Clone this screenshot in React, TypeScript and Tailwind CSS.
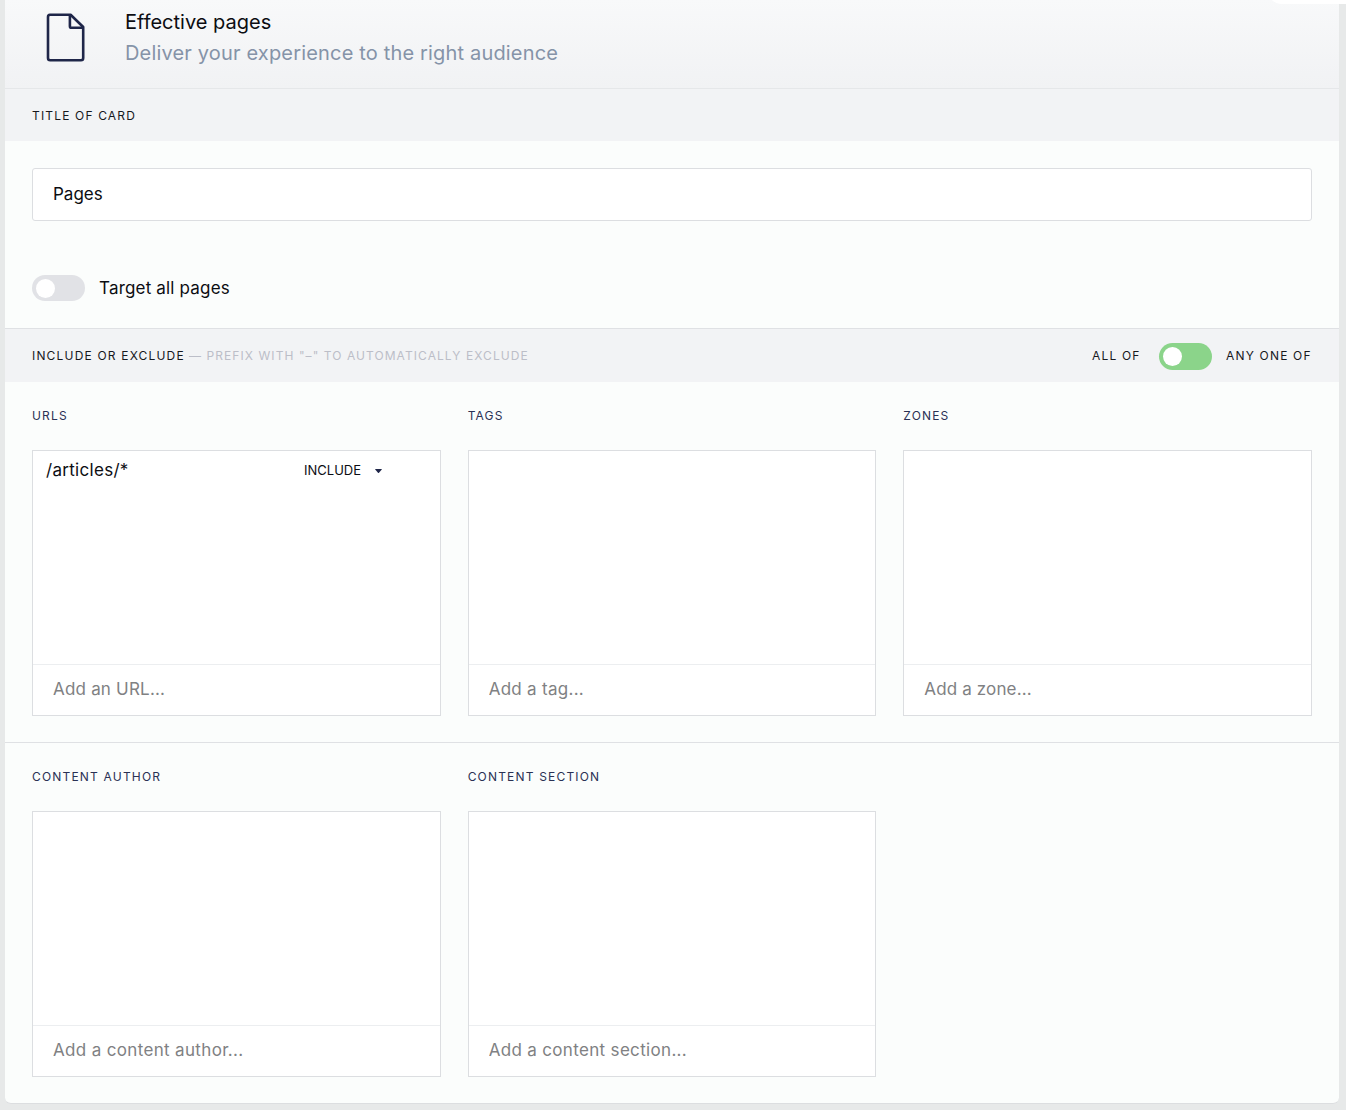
import { useState } from "react";

type ToggleProps = {
    tone: string;
    className?: string;
    onClick: () => void;
};

const Toggle = ({ tone, className = "", onClick }: ToggleProps) => (
    <button
        type="button"
        onClick={onClick}
        className={`flex w-[53px] shrink-0 items-center rounded-full pl-1 ${tone} ${className}`}
    >
        <span className="h-[19px] w-[18.5px] rounded-full bg-white" />
    </button>
);

const FileIcon = () => (
    <svg width="40" height="50" viewBox="0 0 40 50" fill="none" stroke="#1f2649" strokeWidth="2.6" strokeLinejoin="round">
        <path d="M4 2.8H24.6L37.2 15V46.1a2.2 2.2 0 0 1-2.2 2.2H4.2a2.2 2.2 0 0 1-2.2-2.2V5a2.2 2.2 0 0 1 2-2.2Z" />
        <path d="M23.9 2.8V14.2a1.6 1.6 0 0 0 1.6 1.6H37.2" />
    </svg>
);

type Field = {
    label: string;
    placeholder: string;
    spacing: string;
    items?: string[];
};

const pageFields: Field[] = [
    { label: "URLS", placeholder: "Add an URL...", spacing: "tracking-[0.2px]", items: ["/articles/*"] },
    { label: "TAGS", placeholder: "Add a tag...", spacing: "tracking-[0.28px]" },
    { label: "ZONES", placeholder: "Add a zone...", spacing: "tracking-[0.14px]" },
];

const contentFields: Field[] = [
    { label: "CONTENT AUTHOR", placeholder: "Add a content author...", spacing: "tracking-[0.34px]" },
    { label: "CONTENT SECTION", placeholder: "Add a content section...", spacing: "tracking-[0.33px]" },
];

const FieldColumn = ({ field }: { field: Field }) => (
    <div>
        <h3 className="h-4 text-xs leading-4 tracking-[1.18px] text-[#2a3154]">{field.label}</h3>
        <div className="mt-[26px] flex h-[266px] flex-col border border-[#dcdee1] bg-white">
            <ul className="flex-1">
                {(field.items ?? []).map((item) => (
                    <li key={item} className="flex h-10 items-center pl-[13px]">
                        <span className="w-[258px] text-[17px] tracking-[0.3px]">{item}</span>
                        <button type="button" className="flex items-center text-[13px]">
                            <span className="w-[57px] text-left">INCLUDE</span>
                            <svg className="ml-[14px]" width="7" height="4" viewBox="0 0 7 4">
                                <path d="M0.6 0H6.4Q7.2 0 6.6 0.7L4 3.7Q3.5 4.2 3 3.7L0.4 0.7Q-0.2 0 0.6 0Z" fill="#1f2649" />
                            </svg>
                        </button>
                    </li>
                ))}
            </ul>
            <input
                className={`h-[51px] border-t border-[#eceef0] px-5 pb-0.5 text-[17px] outline-none placeholder:text-[#808183] ${field.spacing}`}
                placeholder={field.placeholder}
            />
        </div>
    </div>
);

const App = () => {
    const [allPages, setAllPages] = useState(false);
    const [anyOne, setAnyOne] = useState(true);

    return (
        <div className="relative h-[1110px] overflow-hidden bg-[#e7e9e9] pr-[7px] pl-[5px] font-['Inter','Liberation_Sans',sans-serif] text-[#0c0d12]">
            <div className="absolute top-[-26px] right-[-25px] h-[30px] w-[104px] rounded-[15px] bg-white" />
            <div className="h-[1104px] rounded-b-md border-b border-[#dcdee0] bg-[#fbfdfc]">
                <header className="flex h-[89px] border-b border-[#e5e7e9] bg-linear-to-b from-[#f8f9fa] to-[#f1f2f4] pl-[41px]">
                    <div className="mt-3 w-[79px]">
                        <FileIcon />
                    </div>
                    <div className="mt-[7px] text-xl">
                        <h1 className="h-[31px] leading-[30px]">Effective pages</h1>
                        <p className="leading-[30px] tracking-[0.17px] text-[#8593a8]">Deliver your experience to the right audience</p>
                    </div>
                </header>

                <div className="flex h-[52px] items-center bg-[#f2f3f5] px-[27px] pt-0.5 text-xs tracking-[1.16px] text-[#17181d]">TITLE OF CARD</div>

                <section className="h-[187px] px-[27px] pt-[27px]">
                    <input
                        className="block h-[53px] w-full rounded-[3px] border border-[#dcdee1] bg-white px-5 pb-0.5 text-[17px] outline-none"
                        defaultValue="Pages"
                    />
                    <div className="mt-[54px] flex items-center">
                        <Toggle className="h-[26px]" tone={allPages ? "bg-[#8bd48a]" : "bg-[#e1e2e6]"} onClick={() => setAllPages(!allPages)} />
                        <span className="ml-[14px] text-[17px] leading-[26px] tracking-[0.18px]">Target all pages</span>
                    </div>
                </section>

                <div className="flex h-[54px] items-center justify-between border-t border-[#dfe1e4] bg-[#f2f3f5] px-[27px] text-xs text-[#17181d]">
                    <div className="flex">
                        <span className="w-[157px] tracking-[1.18px]">INCLUDE OR EXCLUDE</span>
                        <span className="tracking-[1.07px] text-[#bcbec8]">— PREFIX WITH "–" TO AUTOMATICALLY EXCLUDE</span>
                    </div>
                    <div className="flex items-center">
                        <span className="w-[67px] tracking-[1.18px]">ALL OF</span>
                        <Toggle className="mt-px h-[27px]" tone={anyOne ? "bg-[#8bd48a]" : "bg-[#e1e2e6]"} onClick={() => setAnyOne(!anyOne)} />
                        <span className="ml-[14px] w-[86px] whitespace-nowrap tracking-[1.18px]">ANY ONE OF</span>
                    </div>
                </div>

                <section className="grid h-[360px] grid-cols-3 gap-x-[27px] px-[27px] pt-[26px]">
                    {pageFields.map((field) => (
                        <FieldColumn key={field.label} field={field} />
                    ))}
                </section>

                <section className="grid grid-cols-3 gap-x-[27px] border-t border-[#dfe1e4] px-[27px] pt-[26px]">
                    {contentFields.map((field) => (
                        <FieldColumn key={field.label} field={field} />
                    ))}
                </section>
            </div>
        </div>
    );
};

export default App;
